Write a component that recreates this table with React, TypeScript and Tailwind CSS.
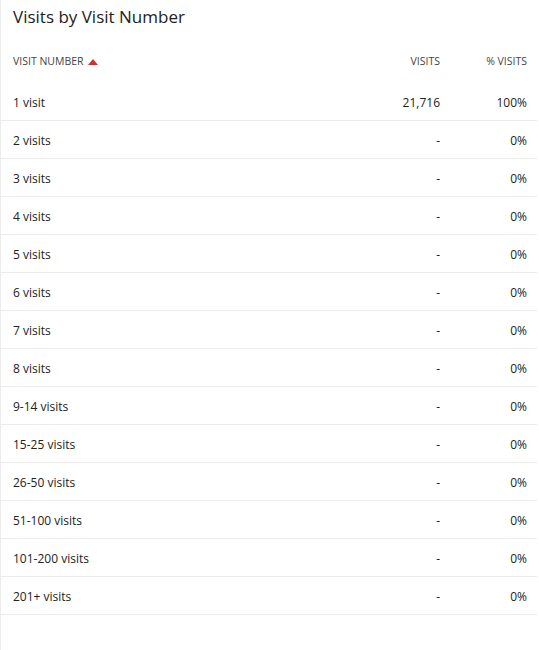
const rows: { label: string; visits: string; pct: string }[] = [
  { label: '1 visit', visits: '21,716', pct: '100%' },
  { label: '2 visits', visits: '-', pct: '0%' },
  { label: '3 visits', visits: '-', pct: '0%' },
  { label: '4 visits', visits: '-', pct: '0%' },
  { label: '5 visits', visits: '-', pct: '0%' },
  { label: '6 visits', visits: '-', pct: '0%' },
  { label: '7 visits', visits: '-', pct: '0%' },
  { label: '8 visits', visits: '-', pct: '0%' },
  { label: '9-14 visits', visits: '-', pct: '0%' },
  { label: '15-25 visits', visits: '-', pct: '0%' },
  { label: '26-50 visits', visits: '-', pct: '0%' },
  { label: '51-100 visits', visits: '-', pct: '0%' },
  { label: '101-200 visits', visits: '-', pct: '0%' },
  { label: '201+ visits', visits: '-', pct: '0%' },
];

export default function App() {
  return (
    <div
      className="h-[650px] w-[539px] bg-white border-l border-[#ececec] text-[#222]"
      style={{ fontFamily: '"Open Sans", "Noto Sans", sans-serif' }}
    >
      <h1 className="pl-[12px] pt-[5px] text-[17px] font-normal leading-[24px] text-[#222]">
        Visits by Visit Number
      </h1>

      <div className="mt-[10px] pr-[2px]">
        <div className="flex h-[44px] items-center pl-[12px] pr-[10px] pt-[2px] text-[10.5px] uppercase text-[#444]">
          <div className="flex flex-1 items-center gap-[4px]">
            <span>Visit Number</span>
            <svg width="10" height="6" viewBox="0 0 10 6" className="mb-[1px]">
              <polygon points="0,6 5,0 10,6" fill="#d32f2f" />
            </svg>
          </div>
          <div className="w-[120px] text-right">Visits</div>
          <div className="w-[87px] text-right">% Visits</div>
        </div>

        {rows.map((r) => (
          <div
            key={r.label}
            className="flex h-[38px] items-center border-b border-[#ececec] pl-[12px] pr-[10px] pt-[2px] text-[12px]"
          >
            <div className="flex-1">{r.label}</div>
            <div className="w-[120px] text-right">{r.visits}</div>
            <div className="w-[87px] text-right">{r.pct}</div>
          </div>
        ))}
      </div>
    </div>
  );
}
